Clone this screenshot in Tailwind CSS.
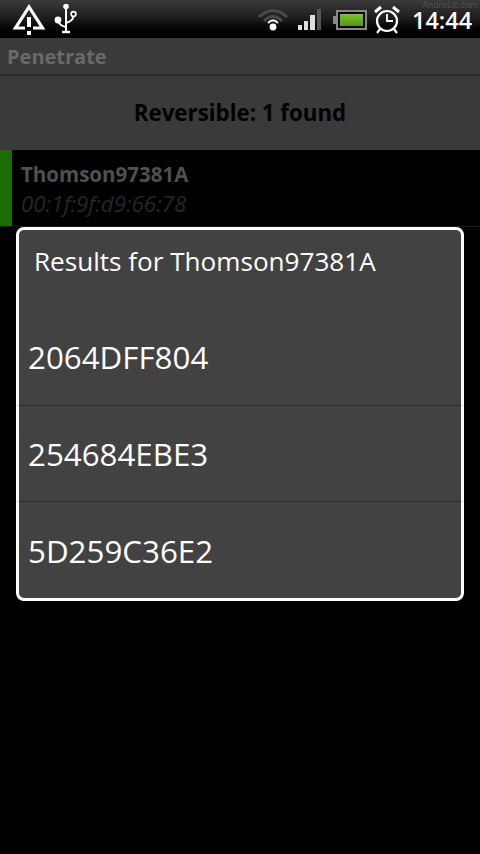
<!DOCTYPE html>
<html lang="en">
<head>
    <meta charset="UTF-8">
    <meta name="viewport" content="width=device-width, initial-scale=1.0">
    <title>Penetrate</title>
    <script src="https://cdn.jsdelivr.net/npm/@tailwindcss/browser@4"></script>
</head>
<body class="bg-black">
<div class="relative w-[480px] h-[854px] overflow-hidden bg-black font-['Open_Sans','Noto_Sans',sans-serif]">

    <!-- Status bar -->
    <div class="h-[38px] flex items-center bg-gradient-to-b from-[#3a3a3a] via-[#1c1c1c] to-black relative">
        <svg class="absolute left-[12px] top-[3px]" width="36" height="34" viewBox="0 0 36 34">
            <path d="M13 25 H3.5 L17 4 L30.5 25 H21" fill="none" stroke="#fff" stroke-width="3.2" stroke-linejoin="miter"/>
            <rect x="15" y="14" width="4" height="10" fill="#fff"/>
            <rect x="15" y="28" width="4" height="4" fill="#fff"/>
        </svg>
        <svg class="absolute left-[52px] top-[3px]" width="28" height="32" viewBox="0 0 28 32">
            <circle cx="14" cy="3.5" r="2.8" fill="#fff"/>
            <path d="M14 4 V28" stroke="#fff" stroke-width="2"/>
            <path d="M10 29 H18" stroke="#fff" stroke-width="2.4"/>
            <circle cx="6" cy="17" r="3.4" fill="#fff"/>
            <path d="M6 18 Q8 23 14 24" stroke="#fff" stroke-width="2" fill="none"/>
            <circle cx="21.5" cy="11" r="2.4" fill="none" stroke="#fff" stroke-width="1.6"/>
            <path d="M21.5 13 Q21 18 14 20" stroke="#fff" stroke-width="2" fill="none"/>
        </svg>
        <svg class="absolute left-[256px] top-[6px]" width="34" height="26" viewBox="0 0 34 26">
            <path d="M3 11 Q17 -2 31 11" stroke="#4a4a4a" stroke-width="3" fill="none"/>
            <path d="M8 15 Q17 6 26 15" stroke="#4a4a4a" stroke-width="3" fill="none"/>
            <path d="M12 17 Q17 12 22 17" stroke="#e8e8e8" stroke-width="2.2" fill="none"/>
            <circle cx="17" cy="21" r="3.4" fill="#fff"/>
        </svg>
        <div class="absolute left-[298px] top-[9px] h-[21px] flex items-end gap-[2px]">
            <div class="w-[4px] h-[5px] bg-[#ddd]"></div>
            <div class="w-[4px] h-[9px] bg-[#ddd]"></div>
            <div class="w-[5px] h-[15px] bg-[#ddd]"></div>
            <div class="w-[4px] h-[21px] bg-[#555]"></div>
        </div>
        <div class="absolute left-[333px] top-[10px] w-[34px] h-[20px] flex items-center">
            <div class="w-[3px] h-[8px] bg-[#888]"></div>
            <div class="w-[31px] h-[20px] border-2 border-[#8a8a80] bg-black p-[2px]">
                <div class="w-full h-full bg-gradient-to-b from-[#7cc22e] to-[#4f9a12]"></div>
            </div>
        </div>
        <svg class="absolute left-[373px] top-[5px]" width="28" height="30" viewBox="0 0 28 30">
            <circle cx="14" cy="16" r="10" fill="none" stroke="#fff" stroke-width="2.2"/>
            <path d="M14 9 V16 H20" stroke="#fff" stroke-width="1.8" fill="none"/>
            <path d="M2 7 L8 2 M26 7 L20 2" stroke="#fff" stroke-width="3"/>
            <path d="M7 24 L4 28 M21 24 L24 28" stroke="#fff" stroke-width="2.2"/>
        </svg>
        <span class="absolute left-[412px] top-[8px] text-[23.5px] leading-[24px] font-semibold text-white">14:44</span>
        <span class="absolute right-[2px] top-[1px] text-[8.5px] leading-[7px] text-[#555]">AndroLib.com</span>
    </div>

    <!-- Title bar -->
    <div class="h-[38px] flex items-center pl-[7px] pt-[1px] bg-[#3a3a3a] border-b-2 border-[#2a2a2a]">
        <span class="text-[20px] font-bold text-[#6a6a6a]">Penetrate</span>
    </div>

    <!-- Results count -->
    <div class="h-[74px] flex items-center justify-center bg-[#3a3a3a] text-[22.3px] font-bold text-black">Reversible: 1 found</div>

    <!-- Network row -->
    <div class="h-[77px] flex border-b border-[#1c1c1c]">
        <div class="w-[12px] bg-[#1c6b04]"></div>
        <div class="pl-[9px] pt-[9px]">
            <div class="text-[20.5px] leading-[30px] font-bold text-[#505050]">Thomson97381A</div>
            <div class="text-[22.3px] leading-[30px] italic text-[#262626]">00:1f:9f:d9:66:78</div>
        </div>
    </div>

    <!-- Dialog -->
    <div class="absolute left-[16px] top-[227px] w-[448px] h-[374px] rounded-[8px] border-[3px] border-white bg-[#424242] text-white">
        <div class="h-[64px] pl-[15px] flex items-center text-[26.1px]">Results for Thomson97381A</div>
        <div class="h-[112px] pl-[9px] pt-[15px] flex items-center text-[31.3px] border-b border-[#2b2b2b]">2064DFF804</div>
        <div class="h-[96px] pl-[9px] pt-[2px] flex items-center text-[31.3px] border-b border-[#2b2b2b]">254684EBE3</div>
        <div class="h-[96px] pl-[9px] pt-[2px] flex items-center text-[31.3px]">5D259C36E2</div>
    </div>
</div>
</body>
</html>
